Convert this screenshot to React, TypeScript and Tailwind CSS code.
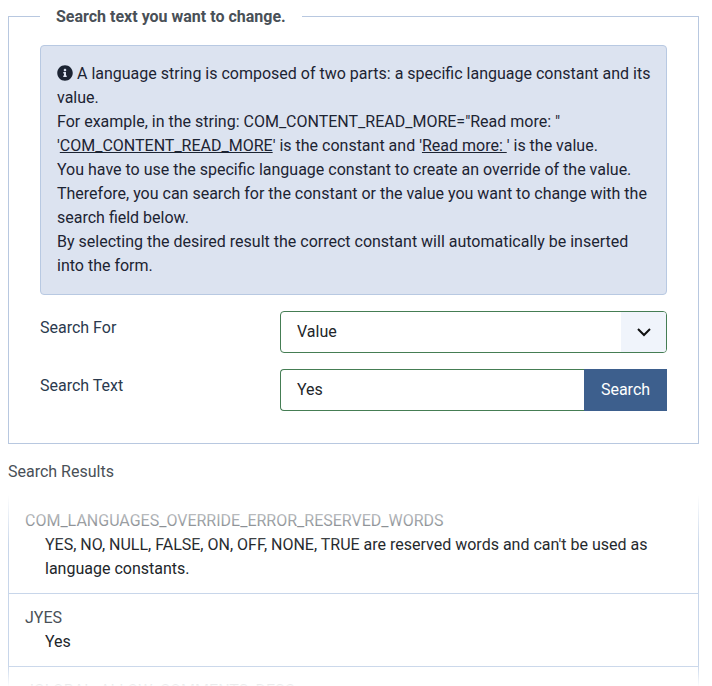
function InfoIcon() {
  return (
    <svg viewBox="0 0 512 512" className="inline-block w-4 h-4 align-[-2px] fill-[#1c2433]">
      <path d="M256 8C119 8 8 119 8 256s111 248 248 248 248-111 248-248S393 8 256 8zm0 110c23.200 0 42 18.800 42 42s-18.800 42-42 42-42-18.800-42-42 18.800-42 42-42zm56 254c0 6.600-5.400 12-12 12h-88c-6.600 0-12-5.400-12-12v-24c0-6.600 5.400-12 12-12h12v-64h-12c-6.600 0-12-5.400-12-12v-24c0-6.600 5.400-12 12-12h64c6.600 0 12 5.400 12 12v100h12c6.600 0 12 5.400 12 12v24z" />
    </svg>
  );
}

export default function App() {
  return (
    <div className="bg-white h-[686px] overflow-hidden pt-px pl-2 pr-[13px] font-['Roboto',sans-serif] text-base leading-6 text-[#22262a]">
      <fieldset className="border border-[#b8c8e0] px-[31px] pb-[32px] mb-[16px] mt-[15px] min-w-0">
        <legend className="px-4 font-bold text-[#495057] text-base leading-[0] h-0"><span className="relative">Search text you want to change.</span></legend>
        <div className="mt-7 mb-4 border border-[#b8c9e2] rounded bg-[#dce3f0] py-4 pl-4 pr-3 text-[#1c2433]">
          <InfoIcon /> A language string is composed of two parts: a specific language constant and its value.
          <br />
          For example, in the string: COM_CONTENT_READ_MORE="Read more: "
          <br />
          '<u>COM_CONTENT_READ_MORE</u>' is the constant and '<u>Read more: </u>' is the value.
          <br />
          You have to use the specific language constant to create an override of the value.
          <br />
          Therefore, you can search for the constant or the value you want to change with the search field below.
          <br />
          By selecting the desired result the correct constant will automatically be inserted into the form.
        </div>
        <div className="flex mb-4">
          <div className="w-[240px] shrink-0 pt-[5px] text-[#2b3a4e]">Search For</div>
          <div className="flex-1 h-[42px] flex items-center justify-between border border-[#457d54] rounded overflow-hidden">
            <span className="pl-4 text-[#22262a]">Value</span>
            <span className="w-[45px] h-full bg-[#f0f4fb] flex items-center justify-center">
              <svg viewBox="0 0 16 16" className="w-4 h-4 fill-none stroke-[#111] stroke-2">
                <path d="M2 5l6 6 6-6" />
              </svg>
            </span>
          </div>
        </div>
        <div className="flex">
          <div className="w-[240px] shrink-0 pt-[5px] text-[#2b3a4e]">Search Text</div>
          <div className="flex-1 h-[42px] flex">
            <div className="flex-1 border border-r-0 border-[#457d54] rounded-l flex items-center pl-4 text-[#22262a]">Yes</div>
            <div className="w-[83px] bg-[#3d5f8d] text-white flex items-center justify-center">Search</div>
          </div>
        </div>
      </fieldset>
      <div className="text-[#495057]">Search Results</div>
      <div className="relative mt-[11px] h-[210px] border-x border-[#c8d6ea]">
        <div className="border-b border-[#c8d6ea] px-4 pt-[14px] pb-[12px]">
          <div className="text-[#495057]">COM_LANGUAGES_OVERRIDE_ERROR_RESERVED_WORDS</div>
          <div className="ml-5">YES, NO, NULL, FALSE, ON, OFF, NONE, TRUE are reserved words and can't be used as language constants.</div>
        </div>
        <div className="border-b border-[#c8d6ea] px-4 pt-[12px] pb-[12px]">
          <div className="text-[#495057]">JYES</div>
          <div className="ml-5">Yes</div>
        </div>
        <div className="px-4 pt-[12px]">
          <div className="text-[#495057]">JGLOBAL_ALLOW_COMMENTS_DESC</div>
        </div>
        <div className="absolute -inset-x-px top-0 h-[50px] bg-gradient-to-b from-white to-transparent" />
        <div className="absolute -inset-x-px top-[170px] h-[22px] bg-gradient-to-t from-white to-transparent" />
      </div>
    </div>
  );
}
